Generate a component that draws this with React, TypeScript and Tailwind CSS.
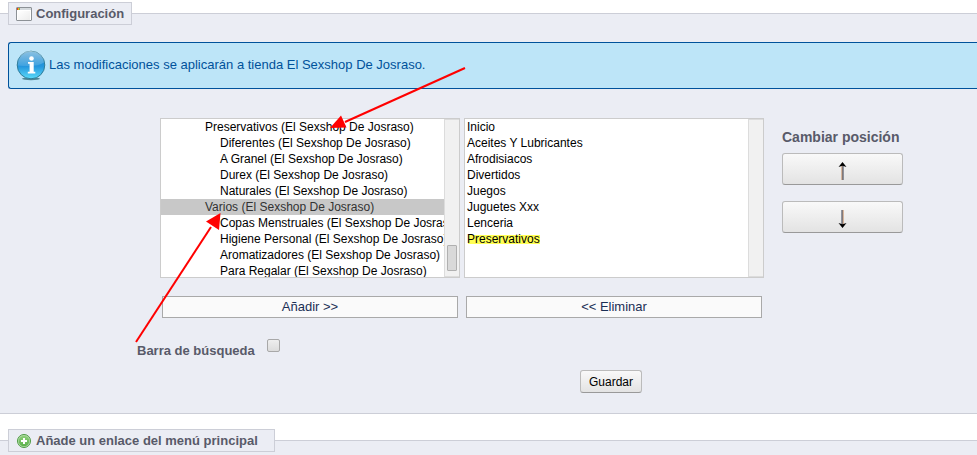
import React from 'react';

const SHOP = '(El Sexshop De Josraso)';

const available = [
  { name: 'Preservativos', child: false },
  { name: 'Diferentes', child: true },
  { name: 'A Granel', child: true },
  { name: 'Durex', child: true },
  { name: 'Naturales', child: true },
  { name: 'Varios', child: false },
  { name: 'Copas Menstruales', child: true },
  { name: 'Higiene Personal', child: true },
  { name: 'Aromatizadores', child: true },
  { name: 'Para Regalar', child: true },
];

const chosen = ['Inicio', 'Aceites Y Lubricantes', 'Afrodisiacos', 'Divertidos', 'Juegos', 'Juguetes Xxx', 'Lenceria', 'Preservativos'];

function WindowIcon() {
  return (
    <svg width="16" height="16" viewBox="0 0 16 16" aria-hidden="true">
      <defs>
        <linearGradient id="pane" x1="0" y1="0" x2="1" y2="1">
          <stop offset="0" stopColor="#fff" />
          <stop offset="1" stopColor="#ececec" />
        </linearGradient>
      </defs>
      <rect x="0.5" y="1.5" width="15" height="13" rx="0.5" fill="#fff" stroke="#8c9196" />
      <rect x="1" y="2" width="14" height="2" fill="#d5dade" />
      <rect x="2" y="5" width="12" height="9" fill="url(#pane)" />
      <rect x="1" y="2" width="1" height="2" fill="#e03c20" />
      <rect x="2" y="2" width="1" height="2" fill="#f0b020" />
      <rect x="3" y="2" width="1" height="2" fill="#7ab648" />
    </svg>
  );
}

function AddIcon() {
  return (
    <svg width="16" height="16" viewBox="0 0 16 16" aria-hidden="true">
      <defs>
        <linearGradient id="leaf" x1="0" y1="0" x2="0" y2="1">
          <stop offset="0" stopColor="#8fd07c" />
          <stop offset="1" stopColor="#5bb04a" />
        </linearGradient>
      </defs>
      <circle cx="8" cy="8" r="6.5" fill="#b9dfae" stroke="#4c9a42" />
      <circle cx="8" cy="8" r="5.3" fill="url(#leaf)" />
      <path d="M7 5h2v2h2v2H9v2H7V9H5V7h2z" fill="#fff" />
    </svg>
  );
}

function InfoIcon() {
  return (
    <svg width="32" height="32" viewBox="0 0 32 32" aria-hidden="true" className="shrink-0">
      <defs>
        <linearGradient id="ball" x1="0" y1="0" x2="0" y2="1">
          <stop offset="0" stopColor="#1c86c8" />
          <stop offset="0.55" stopColor="#2596dd" />
          <stop offset="1" stopColor="#5cdcfa" />
        </linearGradient>
        <linearGradient id="gloss" x1="0" y1="0" x2="0" y2="1">
          <stop offset="0" stopColor="#fff" stopOpacity="0.5" />
          <stop offset="1" stopColor="#fff" stopOpacity="0.12" />
        </linearGradient>
      </defs>
      <ellipse cx="16" cy="28.8" rx="9" ry="1.4" fill="#4f8796" />
      <circle cx="16" cy="15" r="13.8" fill="url(#ball)" stroke="#2f7c99" />
      <path d="M3 15.5A13 13 0 0 1 29 12.5Q22 17.5 3 15.5z" fill="url(#gloss)" />
      <circle cx="16.5" cy="8.5" r="2.3" fill="#fff" />
      <path d="M13 12h5.7v9.8h1.6v1.8h-7.5v-1.8h1.8v-8H13z" fill="#fff" />
    </svg>
  );
}

function PositionArrow({ down = false }: { down?: boolean }) {
  return (
    <svg width="9" height="18" viewBox="0 0 9 18" className={down ? 'translate-y-0.5 rotate-180' : 'translate-y-0.5'} aria-hidden="true">
      <path d="M4 2V18" stroke="#c08050" />
      <path d="M5 2V18" stroke="#303a50" />
      <path d="M4.5 0 8.5 5 4.5 3.8 0.5 5z" fill="#000" />
    </svg>
  );
}

function ScrollTrack({ thumb = false }: { thumb?: boolean }) {
  return (
    <div className="flex w-[15px] shrink-0 flex-col justify-end border border-r-0 border-[#dcdcdc] bg-[#f1f1f1] px-0.5 pb-[5px]" aria-hidden="true">
      {thumb && <div className="h-[26px] rounded-[1px] border border-[#b0b0b0] bg-[#d9d9d9]" />}
    </div>
  );
}

const listClass = 'block h-full min-w-0 flex-1 appearance-none overflow-hidden bg-white text-xs text-black outline-none';
const optionClass = 'block h-4 min-h-0 overflow-hidden whitespace-pre pb-0 pr-0 pt-px leading-4';
const moveClass = 'mx-0.5 mt-[18px] h-[22px] border border-[#a9a9a9] bg-[#fafafa] text-[13px] leading-5 text-[#1a2f55]';
const raisedClass = 'flex items-center justify-center rounded-[3px] border border-[#bbb] border-b-[#999] bg-gradient-to-b from-[#f9f9f9] to-[#e3e3e3] text-black';
const legendClass = 'ml-2 flex h-[23px] items-center gap-1 border border-[#ccced7] bg-[#ebedf4] pl-[7px] text-[13px] font-bold text-[#585a69]';

export default function App() {
  return (
    <div className="relative overflow-hidden bg-white pt-0.5 font-['Liberation_Sans',Arial,sans-serif] text-[13px] text-[#585a69]">
      <fieldset className="border-y border-[#ccced7] bg-[#ebedf4] pb-5">
        <legend className={`${legendClass} pr-[7px]`}>
          <WindowIcon />
          Configuración
        </legend>

        <div className="ml-2 mt-[17px] flex h-[47px] items-center gap-0.5 rounded-l-[3px] border border-r-0 border-[#00529b] bg-[#bde5f8] pl-1.5 text-[#00529b]" role="status">
          <InfoIcon />
          <p className="pb-0.5">Las modificaciones se aplicarán a tienda El Sexshop De Josraso.</p>
        </div>

        <div className="mt-[29px] flex pl-40">
          <div className="flex w-[300px] flex-col">
            <div className="flex h-40 border border-[#ccc] bg-white">
              <select multiple aria-label="Enlaces disponibles" defaultValue={['Varios']} className={listClass}>
                {available.map((item) => (
                  <option
                    key={item.name}
                    value={item.name}
                    className={`${optionClass} ${item.child ? 'pl-[59px]' : 'pl-11'} checked:bg-[#c8c8c8] checked:bg-[linear-gradient(#c8c8c8,#c8c8c8)] checked:text-[#323232]`}
                  >
                    {`${item.name} ${SHOP}`}
                  </option>
                ))}
              </select>
              <ScrollTrack thumb />
            </div>
            <button type="button" className={moveClass}>Añadir &gt;&gt;</button>
          </div>

          <div className="ml-1 flex w-[300px] flex-col">
            <div className="flex h-40 border border-[#ccc] bg-white">
              <select multiple aria-label="Enlaces del menú" className={listClass}>
                {chosen.map((name) => (
                  <option
                    key={name}
                    className={`${optionClass} pl-0.5 ${name === 'Preservativos' ? 'bg-[linear-gradient(#ffff55,#ffff55)] bg-[length:72px_9px] bg-[position:3px_4px] bg-no-repeat' : ''}`}
                  >
                    {name}
                  </option>
                ))}
              </select>
              <ScrollTrack />
            </div>
            <button type="button" className={moveClass}>&lt;&lt; Eliminar</button>
          </div>

          <div className="ml-[18px] flex min-w-[121px] flex-col gap-4 pt-[11px]">
            <h2 className="-mb-2 text-sm font-bold leading-4">Cambiar posición</h2>
            <button type="button" aria-label="Subir" className={`${raisedClass} h-8`}>
              <PositionArrow />
            </button>
            <button type="button" aria-label="Bajar" className={`${raisedClass} h-8`}>
              <PositionArrow down />
            </button>
          </div>
        </div>

        <div className="mt-[21px] flex items-start gap-3 pl-[137px]">
          <label htmlFor="search-bar" className="pt-1 font-bold leading-4">Barra de búsqueda</label>
          <input
            id="search-bar"
            type="checkbox"
            className="size-[13px] appearance-none rounded-[2px] border border-[#a8a8a8] bg-gradient-to-b from-[#eee] to-[#dcdcdc]"
          />
        </div>

        <div className="mt-[11px] pl-[580px]">
          <button type="submit" className={`${raisedClass} h-[23px] px-2 text-xs`}>Guardar</button>
        </div>
      </fieldset>

      <fieldset className="mt-[15px] border-t border-[#ccced7] bg-[#ebedf4]">
        <legend className={`${legendClass} pr-4`}>
          <AddIcon />
          Añade un enlace del menú principal
        </legend>
        <div className="h-1" />
      </fieldset>

      <svg className="pointer-events-none absolute left-0 top-0" width="977" height="455" viewBox="0 0 977 455" aria-hidden="true">
        <g stroke="#f00" strokeWidth="2" fill="#f00">
          <path d="M465 68 345 122" />
          <path d="M136 342 211 227" />
          <path d="M330 128 341 115.500 346.500 127.500z" stroke="none" />
          <path d="M220.500 213 219 230 206 221.500z" stroke="none" />
        </g>
      </svg>
    </div>
  );
}
